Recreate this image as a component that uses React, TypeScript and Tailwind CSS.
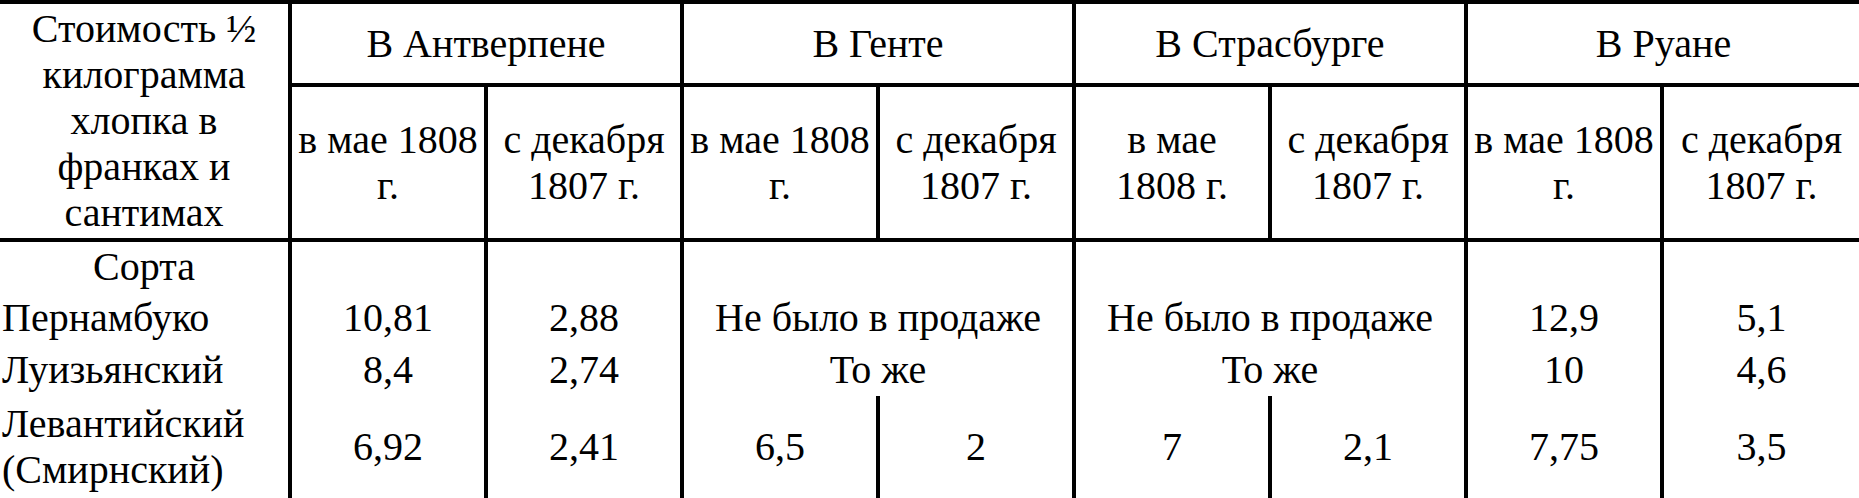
const cities = ['В Антверпене', 'В Генте', 'В Страсбурге', 'В Руане'];

const subHeaders: string[][] = [
  ['в мае 1808', 'г.'],
  ['с декабря', '1807 г.'],
  ['в мае 1808', 'г.'],
  ['с декабря', '1807 г.'],
  ['в мае', '1808 г.'],
  ['с декабря', '1807 г.'],
  ['в мае 1808', 'г.'],
  ['с декабря', '1807 г.'],
];

type Row = { label: string; values: string[]; merged: string };

const rows: Row[] = [
  { label: 'Пернамбуко', values: ['10,81', '2,88', '12,9', '5,1'], merged: 'Не было в продаже' },
  { label: 'Луизьянский', values: ['8,4', '2,74', '10', '4,6'], merged: 'То же' },
];

const lastRow = ['6,92', '2,41', '6,5', '2', '7', '2,1', '7,75', '3,5'];

const serif = "[font-family:'Liberation_Serif']";
const cell = `${serif} flex items-center justify-center text-center whitespace-nowrap`;
const label = `${serif} flex items-center pl-[2px] whitespace-nowrap`;
const vline = 'border-l-4 border-black';

export default function App() {
  return (
    <div
      className="w-[1859px] h-[498px] overflow-hidden bg-white text-black text-[40px] leading-[46px]"
      style={{ fontFamily: '"Liberation Serif", serif' }}
    >
      <div className="grid grid-cols-[288px_repeat(7,196px)_199px] grid-rows-[83px_155px_54px_52px_52px_102px]">
        {/* header */}
        <div className={`${cell} row-span-2 border-t-4 border-black`}>
          <div>
            Стоимость ½
            <br />
            килограмма
            <br />
            хлопка в
            <br />
            франках и
            <br />
            сантимах
          </div>
        </div>
        {cities.map((c) => (
          <div key={c} className={`${cell} col-span-2 border-t-4 ${vline}`}>
            {c}
          </div>
        ))}
        {subHeaders.map((s, i) => (
          <div key={i} className={`${cell} border-t-4 ${vline}`}>
            <div>
              {s[0]}
              <br />
              {s[1]}
            </div>
          </div>
        ))}

        {/* sorts row */}
        <div className={`${cell} border-t-4 border-black`}>Сорта</div>
        <div className={`border-t-4 ${vline}`} />
        <div className={`border-t-4 ${vline}`} />
        <div className={`col-span-2 border-t-4 ${vline}`} />
        <div className={`col-span-2 border-t-4 ${vline}`} />
        <div className={`border-t-4 ${vline}`} />
        <div className={`border-t-4 ${vline}`} />

        {rows.map((r) => (
          <div key={r.label} className="contents">
            <div className={label}>{r.label}</div>
            <div className={`${cell} ${vline}`}>{r.values[0]}</div>
            <div className={`${cell} ${vline}`}>{r.values[1]}</div>
            <div className={`${cell} col-span-2 ${vline}`}>{r.merged}</div>
            <div className={`${cell} col-span-2 ${vline}`}>{r.merged}</div>
            <div className={`${cell} ${vline}`}>{r.values[2]}</div>
            <div className={`${cell} ${vline}`}>{r.values[3]}</div>
          </div>
        ))}

        <div className={label}>
          <div>
            Левантийский
            <br />
            (Смирнский)
          </div>
        </div>
        {lastRow.map((v, i) => (
          <div key={i} className={`${cell} ${vline}`}>
            {v}
          </div>
        ))}
      </div>
    </div>
  );
}
